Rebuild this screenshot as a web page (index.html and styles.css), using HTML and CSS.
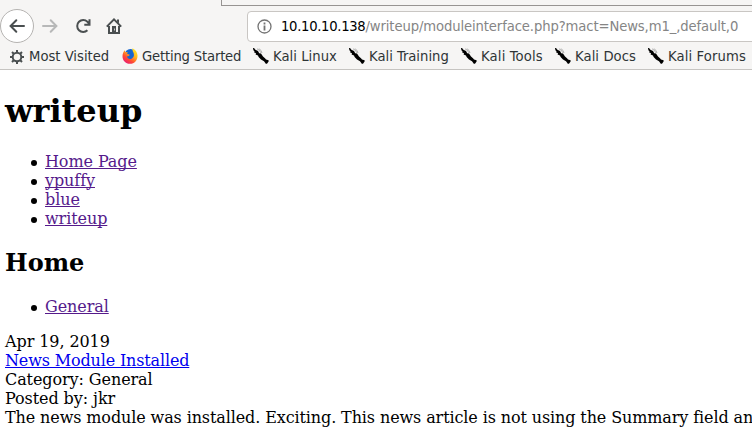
FILE: index.html
```html
<!DOCTYPE html>
<html lang="en">
<head>
<meta charset="utf-8">
<title>writeup</title>
<link rel="stylesheet" href="styles.css">
</head>
<body>
<svg class="defs" width="0" height="0">
  <symbol id="kali" viewBox="0 0 16 16">
    <path d="M0 0h1l1.4 1.8L5 3l1.2 2.2 1.8.4L10 8.4l2 1.8 1 1.2 2.6.8v1.4L14 15.8h-1.2L11 13.2 8 11.6 5.6 9 5 7.4 2.6 6.4 3 5.2 1 4.2l.6-.8L.4 2.2z"/>
    <path d="M4 .8 6 2l2.2 3M5.8.6 8 2.4 9 5" fill="none" stroke="#888" stroke-width=".6"/>
  </symbol>
</svg>
<header class="browser">
  <div class="tabs"><div class="tab-edge"></div></div>
  <nav class="toolbar">
    <button class="back" aria-label="Back"><svg width="16" height="16" viewBox="0 0 16 16"><path d="M15 8H1.8M7.3 2.3 1.6 8l5.7 5.7" stroke-linecap="round"/></svg></button>
    <svg class="tool forward" width="16" height="16" viewBox="0 0 16 16"><path d="M1 8h13.2M8.7 2.3 14.4 8l-5.7 5.7" stroke-linecap="round"/></svg>
    <svg class="tool reload" width="16" height="16" viewBox="0 0 16 16"><path d="M12.4 12.3a6 6 0 1 1 0-8.6l1.6 2M9.3 6.8H14.5V1.2"/></svg>
    <svg class="tool home" width="16" height="16" viewBox="0 0 16 16"><path d="M.8 8.6 8 1.4l7.2 7.2M3 8v7h10V8"/><path class="solid" d="M11 1.5h2v4l-2-2zM6 8h4v7H6z"/><path class="knob" d="M8 10.5h1v2H8z"/></svg>
    <div class="address">
      <svg class="info" width="15" height="15" viewBox="0 0 15 15"><circle cx="7.5" cy="7.5" r="6.5"/><path d="M7.5 6.5v5M7.5 3.4v2" stroke-width="1.8"/></svg>
      <span class="url"><b>10.10.10.138</b>/writeup/moduleinterface.php?mact=News,m1_,default,0</span>
    </div>
  </nav>
  <div class="bookmarks">
    <a class="mark visited"><svg width="16" height="16" viewBox="0 0 16 16"><circle class="gear" cx="8" cy="9" r="4.3"/><path class="teeth" d="M8 2v2.5M8 13.5V16M1 9h2.5M12.5 9H15M3 4l2 2M11 12l2 2M13 4l-2 2M5 12l-2 2"/></svg><span>Most Visited</span></a>
    <a class="mark started"><svg width="16" height="16" viewBox="0 0 16 16">
      <defs><linearGradient id="fire" x1=".9" y1="0" x2=".2" y2="1"><stop offset="0" stop-color="#fff22f"/><stop offset=".4" stop-color="#ffb51e"/><stop offset=".7" stop-color="#ff4b32"/><stop offset="1" stop-color="#e6177c"/></linearGradient></defs>
      <circle cx="8.5" cy="7" r="6" fill="#1665cf"/>
      <path fill="url(#fire)" d="M10.5.2c2 .8 4.9 3.6 5 7.3.2 4.7-3 8.3-7.5 8.3S.4 12.5.5 8C.6 5.5 1.5 3.5 2.8 2.2l.4 1.9 2.6.2-.7 1.5 2.7 1-.8 1.3-2 .5c.2 1.9 2.3 3 4.1 2.3 2-.8 3.3-2.7 2.7-5.1-.3-1.7-1.7-3-1.3-5.6z"/>
    </svg><span>Getting Started</span></a>
    <a class="mark linux"><svg width="16" height="16"><use href="#kali"/></svg><span>Kali Linux</span></a>
    <a class="mark training"><svg width="16" height="16"><use href="#kali"/></svg><span>Kali Training</span></a>
    <a class="mark tools"><svg width="16" height="16"><use href="#kali"/></svg><span>Kali Tools</span></a>
    <a class="mark docs"><svg width="16" height="16"><use href="#kali"/></svg><span>Kali Docs</span></a>
    <a class="mark forums"><svg width="16" height="16"><use href="#kali"/></svg><span>Kali Forums</span></a>
  </div>
</header>
<main class="page">
  <h1>writeup</h1>
  <ul>
    <li><a class="seen" href="#home">Home Page</a></li>
    <li><a class="seen" href="#ypuffy">ypuffy</a></li>
    <li><a class="seen" href="#blue">blue</a></li>
    <li><a class="seen" href="#writeup">writeup</a></li>
  </ul>
  <h2>Home</h2>
  <ul><li><a class="seen" href="#general">General</a></li></ul>
  <article>
    <div>Apr 19, 2019</div>
    <div><a class="fresh" href="#news">News Module Installed</a></div>
    <div>Category: General</div>
    <div>Posted by: jkr</div>
    <div class="summary">The news module was installed. Exciting. This news article is not using the Summary field and</div>
  </article>
</main>
</body>
</html>
```
FILE: styles.css
```css
* { box-sizing: border-box; }
body { margin: 0; height: 447px; overflow: hidden; background: #fff; }
.defs { display: block; height: 0; }
.browser {
  height: 70px;
  background: #f6f5f4;
  border-bottom: 1px solid #c6c4c1;
  font-family: "DejaVu Sans Condensed", "DejaVu Sans", sans-serif;
  font-stretch: condensed;
  color: #2e3436;
}
.tabs { height: 6px; padding-left: 221px; }
.tab-edge { height: 6px; border-left: 1px solid #979492; border-bottom: 1px solid #979492; }
.toolbar { height: 37px; display: flex; align-items: center; padding-top: 3px; }
.back {
  width: 34px; height: 34px; padding: 0;
  display: flex; align-items: center; justify-content: center;
  background: #fff; border: 1px solid #b5b3b1; border-radius: 50%;
  flex: none;
}
.toolbar svg { fill: none; stroke: #4a4f50; stroke-width: 2; flex: none; }
.toolbar .solid { fill: #4a4f50; stroke: none; }
.toolbar .knob { fill: #c9c9c9; stroke: none; }
.toolbar .forward { margin-left: 8px; stroke: #b7b8b8; }
.reload { margin-left: 17px; }
.home { margin-left: 15px; }
.address {
  width: 520px; height: 31px; margin-left: 125px; padding-left: 9px;
  display: flex; align-items: center; flex: none;
  background: #fff; border: 1px solid #c9c6c3; border-radius: 4px;
}
.toolbar .info { stroke: #737373; stroke-width: 1.3; }
.url {
  margin-left: 9px; padding-bottom: 2px;
  font-size: 14.67px; letter-spacing: -.11px; color: #858585; white-space: nowrap;
}
.url b { font-weight: normal; letter-spacing: -.3px; color: #000; }
.bookmarks { height: 26px; display: flex; align-items: center; padding-left: 9px; }
.mark { display: flex; align-items: center; gap: 4px; flex: none; font-size: 14.67px; white-space: nowrap; }
.mark span { padding-bottom: 2px; }
.visited { width: 113px; }
.started { width: 131px; letter-spacing: -.18px; }
.linux { width: 96px; letter-spacing: .04px; }
.training { width: 112px; }
.tools { width: 94px; letter-spacing: .17px; }
.docs { width: 93px; letter-spacing: .08px; }
.forums { letter-spacing: .12px; }
.gear, .teeth { fill: none; stroke: #4a4f50; stroke-width: 2; }
.page {
  display: flow-root; padding-left: 5px;
  font: 16px/19px "DejaVu Serif", serif; letter-spacing: -.085px; color: #000; white-space: nowrap;
}
h1 { margin: 22px 0; font-size: 32px; line-height: 38px; letter-spacing: 0; }
h2 { margin: 20px 0; font-size: 24px; line-height: 29px; letter-spacing: 0; }
ul { margin: 16px 0; padding-left: 40px; list-style: none; }
li { display: flex; align-items: center; }
li::before {
  content: ""; width: 6px; height: 6px; margin: 2px 8px 0 -14px;
  border-radius: 50%; background: #000;
}
a { text-decoration-skip-ink: none; }
.seen { color: #551a8b; }
.fresh { color: #0000ee; letter-spacing: -.15px; }
.summary { letter-spacing: -.11px; }
```
